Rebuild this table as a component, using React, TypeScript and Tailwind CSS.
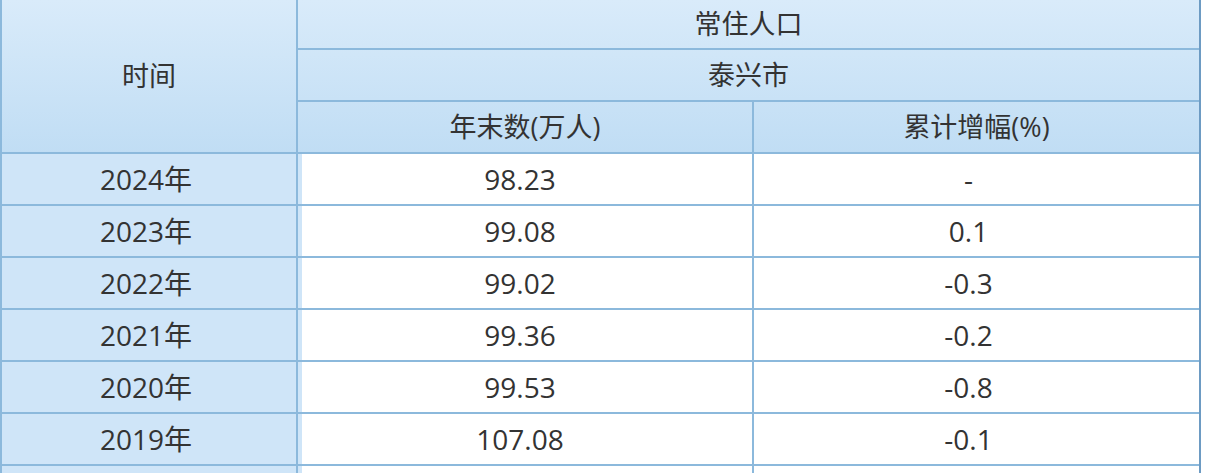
const rows = [
  { year: "2024年", total: "98.23", rate: "-" },
  { year: "2023年", total: "99.08", rate: "0.1" },
  { year: "2022年", total: "99.02", rate: "-0.3" },
  { year: "2021年", total: "99.36", rate: "-0.2" },
  { year: "2020年", total: "99.53", rate: "-0.8" },
  { year: "2019年", total: "107.08", rate: "-0.1" },
  { year: "", total: "", rate: "" },
];

export default function App() {
  return (
    <div className="h-[473px] overflow-hidden bg-white">
      <div
        className="w-[1201px] border-l-2 border-r-2 border-l-[#8cb9dc] border-r-[#6d9bc3] text-[27px] text-[#333333]"
        style={{ fontFamily: '"Open Sans", "Noto Sans CJK SC", sans-serif' }}
      >
        {/* header */}
        <div className="flex bg-[linear-gradient(to_bottom,#d9ebfa,#c0ddf4)]">
          <div className="w-[296px] h-[154px] border-r-2 border-b-2 border-[#8cb9dc] flex items-center justify-center">
            时间
          </div>
          <div className="flex-1 flex flex-col">
            <div className="h-[50px] border-b-2 border-[#8cb9dc] flex items-center justify-center">
              常住人口
            </div>
            <div className="h-[52px] border-b-2 border-[#8cb9dc] flex items-center justify-center">
              泰兴市
            </div>
            <div className="h-[52px] border-b-2 border-[#8cb9dc] flex">
              <div className="w-[456px] border-r-2 border-[#8cb9dc] flex items-center justify-center">
                年末数(万人)
              </div>
              <div className="flex-1 flex items-center justify-center">
                累计增幅(%)
              </div>
            </div>
          </div>
        </div>

        {/* body */}
        {rows.map((r, i) => (
          <div key={i} className="flex h-[52px] border-b-2 border-[#8cb9dc] text-[28px]">
            <div className="w-[296px] border-r-2 border-[#8cb9dc] bg-[#cfe5f8] flex items-center justify-center pr-[6px]">
              {r.year}
            </div>
            <div className="w-[456px] border-l-4 border-l-[#cfe5f8] border-r-2 border-r-[#8cb9dc] bg-white flex items-center justify-center pr-[14px]">
              {r.total}
            </div>
            <div className="flex-1 bg-white flex items-center justify-center pr-[16px]">
              {r.rate}
            </div>
          </div>
        ))}
      </div>
    </div>
  );
}
